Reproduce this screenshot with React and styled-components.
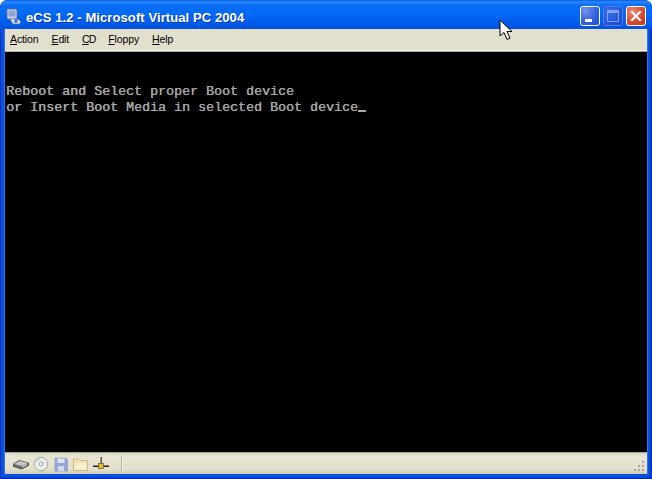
import React from "react";
import styled, { createGlobalStyle } from "styled-components";

const Global = createGlobalStyle`
  html, body { margin: 0; padding: 0; background: #fff; overflow: hidden; }
  #root { width: 652px; height: 479px; }
`;

const Window = styled.div`
  position: relative;
  width: 652px;
  height: 479px;
  display: flex;
  flex-direction: column;
  overflow: hidden;
  border-radius: 8px 8px 0 0;
  background: #0a4fe0;
  box-shadow: inset 1px 0 0 #0838b8, inset -1px -1px 0 #0030a8, inset -2px -2px 0 #0840c8;
`;

const TitleBar = styled.div`
  height: 29px;
  flex: none;
  box-sizing: border-box;
  display: flex;
  align-items: center;
  padding: 3px 6px 0 5px;
  background: linear-gradient(180deg, #0a5ae8 0, #2e8cfb 2px, #1a7dfb 3px, #0a6cf5 6px, #036bf8 12px, #0260ee 20px, #0059e6 25px, #0054e0 27px, #0a55e0 29px);
`;

const AppIcon = styled.svg`
  width: 17px;
  height: 17px;
  flex: none;
  margin-right: 4px;
`;

const Title = styled.div`
  flex: 1;
  padding-top: 2px;
  font: bold 13px/17px "Liberation Sans", Arial, sans-serif;
  color: #fff;
  letter-spacing: 0.09px;
  text-shadow: 1px 1px 0 #0a3aa8;
  white-space: nowrap;
`;

const Controls = styled.div`
  display: flex;
  gap: 3px;
`;

const CtlButton = styled.div`
  width: 20px;
  height: 20px;
  box-sizing: border-box;
  border: 1px solid ${(p) => (p.$disabled ? "#4f7ce6" : "#fff")};
  border-radius: 3px;
  display: flex;
  align-items: center;
  justify-content: center;
  background: ${(p) =>
    p.$close
      ? "radial-gradient(circle at 30% 25%, #ee8a6c, #d9482a 60%, #c03414)"
      : p.$disabled
      ? "radial-gradient(circle at 30% 25%, #3c6fe8, #2052d8 70%, #1c48cc)"
      : "radial-gradient(circle at 25% 20%, #7494ec, #2f5edc 60%, #2450d6)"};
`;

const Body = styled.div`
  flex: 1;
  min-height: 0;
  display: flex;
  flex-direction: column;
  margin: 0 5px 5px 5px;
  background: #e2dfcc;
  box-shadow: -1px 0 0 #2f72ee, 1px 0 0 #2f72ee;
`;

const MenuBar = styled.div`
  height: 21px;
  flex: none;
  box-sizing: border-box;
  padding: 0 0 2px 5px;
  display: flex;
  align-items: center;
  gap: 13px;
  background: #e2dfcc;
  font: 10.5px/14px "Liberation Sans", Arial, sans-serif;
  color: #000;
`;

const MenuItem = styled.span`
  white-space: nowrap;
  letter-spacing: ${(p) => (p.$tight ? "-1px" : "-0.12px")};
  & u { text-underline-offset: 1px; }
`;

const Rule = styled.div`
  height: 2px;
  flex: none;
  background: linear-gradient(180deg, #f4f2e6 0 1px, #a9a793 1px 2px);
`;

const Screen = styled.div`
  height: 400px;
  flex: none;
  box-sizing: border-box;
  padding: 32px 0 0 1px;
  background: #000;
  color: #a8a8a8;
  font: 13.34px/16px "Liberation Mono", "Courier New", monospace;
  text-shadow: 0.4px 0 0 #a8a8a8;
`;

const Line = styled.div`
  height: 16px;
  white-space: pre;
`;

const Cursor = styled.span`
  display: inline-block;
  width: 8px;
  height: 2px;
  background: #a8a8a8;
  vertical-align: -1px;
`;

const StatusBar = styled.div`
  flex: 1;
  min-height: 0;
  display: flex;
  align-items: center;
  box-sizing: border-box;
  border-top: 1px solid #aaa893;
  background: linear-gradient(180deg, #dcd9c4 0, #e8e5d4 3px, #e3e0cc 16px, #cfccb6 100%);
`;

const IconTray = styled.div`
  display: flex;
  align-items: center;
  gap: 4px;
  height: 100%;
  padding-left: 8px;
  width: 116px;
  box-sizing: border-box;
  flex: none;
`;

const StatusIcon = styled.svg`
  width: 16px;
  height: 16px;
  flex: none;
`;

const Separator = styled.div`
  width: 1px;
  height: 16px;
  background: #b5b29c;
  box-shadow: 1px 0 0 #f6f4ea;
  flex: none;
`;

const Spacer = styled.div`
  flex: 1;
`;

const Grip = styled.svg`
  width: 12px;
  height: 12px;
  align-self: flex-end;
  margin: 0 2px 2px 0;
  flex: none;
`;

const Pointer = styled.svg`
  position: absolute;
  left: 499px;
  top: 19px;
  width: 14px;
  height: 22px;
`;

const Menu = ({ k, rest, tight }) => (
  <MenuItem $tight={tight}>
    <u>{k}</u>
    {rest}
  </MenuItem>
);

export default function App() {
  return (
    <Window>
      <Global />
      <TitleBar>
        <AppIcon viewBox="0 0 17 17">
          <path d="M2 1h9l1 1v8l-2 1H3L2 10z" fill="#c9d0e0" stroke="#5a6a90" strokeWidth="0.7" />
          <path d="M3.500 2.500h7v6h-7z" fill="#8fa4d4" />
          <path d="M5 11h8l3 3-2 2H8z" fill="#dfe4ee" stroke="#6d7a9a" strokeWidth="0.7" />
          <circle cx="11" cy="13" r="2" fill="#4f78c8" />
        </AppIcon>
        <Title>eCS 1.2 - Microsoft Virtual PC 2004</Title>
        <Controls>
          <CtlButton>
            <svg width="18" height="18" viewBox="0 0 18 18">
              <rect x="4" y="12" width="7" height="3" fill="#fff" />
            </svg>
          </CtlButton>
          <CtlButton $disabled>
            <svg width="18" height="18" viewBox="0 0 18 18">
              <rect x="3.500" y="3.500" width="11" height="11" fill="none" stroke="#7f9ff0" />
              <rect x="4" y="4" width="10" height="2" fill="#7f9ff0" />
            </svg>
          </CtlButton>
          <CtlButton $close>
            <svg width="18" height="18" viewBox="0 0 18 18">
              <path d="M5 5l8 8M13 5l-8 8" stroke="#fff" strokeWidth="2.200" strokeLinecap="square" />
            </svg>
          </CtlButton>
        </Controls>
      </TitleBar>
      <Body>
        <MenuBar>
          <Menu k="A" rest="ction" />
          <Menu k="E" rest="dit" />
          <Menu k="C" rest="D" tight />
          <Menu k="F" rest="loppy" />
          <Menu k="H" rest="elp" />
        </MenuBar>
        <Rule />
        <Screen>
          <Line>Reboot and Select proper Boot device</Line>
          <Line>
            or Insert Boot Media in selected Boot device
            <Cursor />
          </Line>
        </Screen>
        <StatusBar>
          <IconTray>
            <StatusIcon viewBox="0 0 16 16">
              <path d="M0.500 8l6-3.500 9 2.500v2.500l-7 3.500-8-2.500z" fill="#6f6f6c" stroke="#2e2e2e" strokeWidth="0.700" />
              <path d="M1 8l6-3 8 2-6 3z" fill="#c9c9c4" />
              <path d="M9 11l5-2.500" stroke="#e8e8e2" strokeWidth="1" />
            </StatusIcon>
            <StatusIcon viewBox="0 0 16 16">
              <circle cx="8" cy="8" r="6.800" fill="#ecebe6" stroke="#a9a89a" />
              <circle cx="8" cy="8" r="2" fill="#fff" stroke="#9aa6c8" />
              <path d="M3 6a5 5 0 0 1 4-3" stroke="#b4c0dc" fill="none" />
            </StatusIcon>
            <StatusIcon viewBox="0 0 16 16">
              <path d="M2 2h11l1.500 1.500V15H2z" fill="#96a8da" stroke="#8090c4" strokeWidth="0.600" />
              <rect x="4.500" y="2.500" width="7" height="4.500" fill="#dfe4f2" />
              <rect x="5" y="10" width="6" height="5" fill="#d4daee" />
            </StatusIcon>
            <StatusIcon viewBox="0 0 16 16">
              <path d="M0.500 3h5l1.500 1.500h7.500v10h-14z" fill="#f2e2b8" stroke="#d3b878" />
              <path d="M1.500 7h12.500v7h-12.500z" fill="#f6ecd0" />
            </StatusIcon>
            <StatusIcon viewBox="0 0 16 16">
              <path d="M7.500 1h1.500v7h-1.500z" fill="#555" />
              <path d="M0 9.500h16v1.500h-16z" fill="#222" />
              <rect x="5.500" y="7.500" width="5" height="5" fill="#e3b93c" stroke="#6d5a18" strokeWidth="0.700" />
            </StatusIcon>
          </IconTray>
          <Separator />
          <Spacer />
          <Grip viewBox="0 0 12 12">
            <g fill="#a8a593">
              <rect x="9" y="1" width="2" height="2" />
              <rect x="5" y="5" width="2" height="2" />
              <rect x="9" y="5" width="2" height="2" />
              <rect x="1" y="9" width="2" height="2" />
              <rect x="5" y="9" width="2" height="2" />
              <rect x="9" y="9" width="2" height="2" />
            </g>
          </Grip>
        </StatusBar>
      </Body>
      <Pointer viewBox="0 0 14 22">
        <path d="M1 1v16l4-3.500 3 7 3-1.300-3-6.700h5z" fill="#fff" stroke="#000" strokeWidth="1" />
      </Pointer>
    </Window>
  );
}
